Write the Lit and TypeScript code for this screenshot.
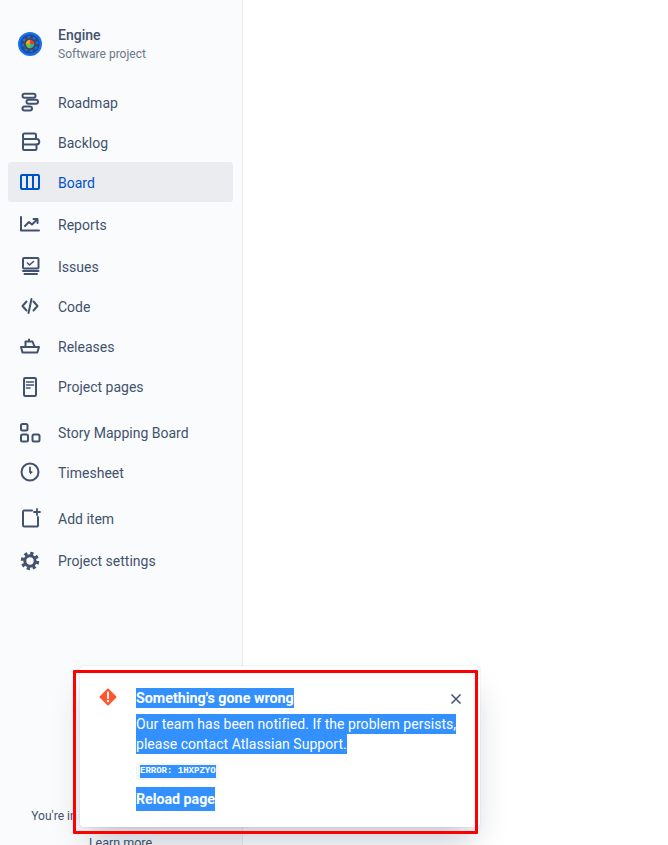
import { LitElement, html, css, svg } from "lit";
import { customElement } from "lit/decorators.js";

const icons: Record<string, unknown> = {
  roadmap: svg`<rect x="4.500" y="2.800" width="13" height="4" rx="2"/><rect x="8.500" y="8.800" width="11.500" height="4" rx="2"/><rect x="4.500" y="15.500" width="9.500" height="4" rx="2"/>`,
  backlog: svg`<rect x="5" y="2.500" width="13" height="5.500" rx="1.500"/><path d="M6.500 8H18.500a1.400 1.400 0 0 1 0 5.500H6.500A1.500 1.500 0 0 1 5 12V9.500A1.500 1.500 0 0 1 6.500 8z"/><path d="M5 12.500v5a1.500 1.500 0 0 0 1.500 1.500H17a1.500 1.500 0 0 0 1.500-1.500v-4"/>`,
  board: svg`<rect x="3" y="4" width="18" height="14" rx="1"/><path d="M9 4v14M15 4v14"/>`,
  reports: svg`<path d="M3 4v13.500h18"/><path d="M7 13l4-4 3 2.500 5-5"/><path d="M15.500 6H19.500V10"/>`,
  issues: svg`<rect x="5" y="3" width="15.500" height="10.500" rx="1"/><path d="M9.500 8l2 2 4-3.500" stroke-width="1.600"/><path d="M5 16h15.500M6.500 19h12.500"/>`,
  code: svg`<path d="M8.500 6.500L4.500 11l4 4.500M15.500 6.500l4 4.500-4 4.500M13.500 4l-3 14"/>`,
  releases: svg`<path d="M3 12h18l-1.700 5.500H4.500z"/><path d="M7.500 11.500V6.500h7l2 5M11 6V4.500"/>`,
  pages: svg`<rect x="6" y="3" width="12" height="18" rx="1.200"/><path d="M8.500 7h7M8.500 10h7M8.500 13h3.500" stroke-width="1.600"/>`,
  story: svg`<rect x="3" y="3" width="6.500" height="6.500" rx="1.500"/><rect x="3" y="13.500" width="7" height="7" rx="1.500"/><rect x="14.500" y="13.500" width="7" height="7" rx="1.500"/>`,
  time: svg`<circle cx="12" cy="11" r="8.500"/><path d="M12 6.500V11" stroke-width="1.800"/><path d="M12 9.500V13.500l3-2.500z" fill="currentColor" stroke="none"/>`,
  add: svg`<path d="M14 3.500H6A1.500 1.500 0 0 0 5 5v13a1.500 1.500 0 0 0 1.500 1.500H19a1 1 0 0 0 1-1.500V10"/><path d="M19 2v6M16 5h6" stroke-width="1.800"/>`,
  settings: svg`<circle cx="12" cy="12" r="5.200" stroke-width="3"/><circle cx="12" cy="12" r="7.700" stroke-width="3" stroke-dasharray="3.200 2.850" stroke-linecap="butt"/>`,
};

const items = [
  { label: "Roadmap", icon: "roadmap", cls: "" },
  { label: "Backlog", icon: "backlog", cls: "" },
  { label: "Board", icon: "board", cls: "active" },
  { label: "Reports", icon: "reports", cls: "m2" },
  { label: "Issues", icon: "issues", cls: "m2" },
  { label: "Code", icon: "code", cls: "" },
  { label: "Releases", icon: "releases", cls: "" },
  { label: "Project pages", icon: "pages", cls: "" },
  { label: "Story Mapping Board", icon: "story", cls: "m6" },
  { label: "Timesheet", icon: "time", cls: "" },
  { label: "Add item", icon: "add", cls: "m6" },
  { label: "Project settings", icon: "settings", cls: "m2" },
];

@customElement("app-root")
export class AppRoot extends LitElement {
  static styles = css`
    :host {
      display: block;
      position: relative;
      width: 668px;
      height: 845px;
      overflow: hidden;
      background: #fff;
      font-family: Roboto, "Noto Sans", sans-serif;
      font-size: 14px;
      color: #42526e;
    }
    .sidebar {
      box-sizing: border-box;
      width: 243px;
      height: 845px;
      background: #fafbfc;
      border-right: 1px solid #ebecf0;
      padding: 24px 9px 0 8px;
      display: flex;
      flex-direction: column;
      overflow: hidden;
    }
    .project {
      display: flex;
      align-items: center;
      gap: 16px;
      padding-left: 10px;
      height: 40px;
      margin-bottom: 18px;
    }
    .project-text { display: flex; flex-direction: column; }
    .name { font-weight: 500; font-size: 14px; line-height: 20px; }
    .sub { font-size: 12px; line-height: 18px; color: #6b778c; }
    .row {
      box-sizing: border-box;
      display: flex;
      align-items: center;
      gap: 16px;
      height: 40px;
      padding: 2px 0 0 10px;
      border-radius: 3px;
    }
    .row svg { flex: none; width: 24px; height: 24px; fill: none; stroke: currentColor; stroke-width: 2; stroke-linecap: round; stroke-linejoin: round; }
    .active { background: #ebecf0; color: #0052cc; }
    .m2 { margin-top: 2px; }
    .m6 { margin-top: 6px; }
    .footer {
      margin-top: auto;
      text-align: center;
      font-size: 12px;
      height: 37px;
    }
    .footer .line1 { line-height: 16px; }
    .footer .learn { font-size: 12.500px; line-height: 16px; margin-top: 11px; }
    .flag {
      position: absolute;
      left: 80px;
      top: 666px;
      box-sizing: border-box;
      width: 400px;
      height: 161px;
      background: #fff;
      border-radius: 3px;
      box-shadow: 0 20px 32px -8px rgba(9, 30, 66, 0.25), 0 0 1px rgba(9, 30, 66, 0.31);
      padding: 22px 16px 16px 56px;
      display: flex;
      flex-direction: column;
    }
    .outline {
      position: absolute;
      left: 73px;
      top: 670px;
      box-sizing: border-box;
      width: 405px;
      height: 164px;
      border: 3px solid #f00;
      border-radius: 1px;
      pointer-events: none;
    }
    .warn { position: absolute; left: 19px; top: 22px; width: 18px; height: 18px; }
    .close { position: absolute; left: 369px; top: 26px; width: 14px; height: 14px; fill: none; stroke: #42526e; stroke-width: 1.500; }
    .sel { display: inline-block; background: #3390ff; color: #fff; vertical-align: top; }
    .title { font-size: 14.300px; font-weight: 700; line-height: 20px; }
    .body { margin-top: 6px; font-size: 14px; line-height: 20px; width: 330px; white-space: nowrap; letter-spacing: 0.04px; }
    .chip {
      align-self: flex-start;
      margin-top: 8px;
      background: #f4f5f7;
      border-radius: 3px;
      padding: 0 3px 0 4px;
      height: 17px;
      display: flex;
      align-items: center;
      font-family: "Liberation Mono", monospace;
      font-weight: 700;
      font-size: 9px;
      line-height: 13px;
      position: relative;
      top: 1px;
    }
    .reload {
      align-self: flex-start;
      margin-top: 8px;
      font-size: 14.200px;
      font-weight: 700;
      line-height: 24px;
    }
  `;

  render() {
    return html`
      <div class="sidebar">
        <div class="project">
          <svg width="24" height="24" viewBox="0 0 24 24" style="flex:none">
            <circle cx="12" cy="12" r="12" fill="#1d6fe6" />
            <circle cx="12" cy="12" r="9" fill="none" stroke="#0b4fc0" stroke-width="1.500" />
            <circle cx="12" cy="12" r="7.500" fill="none" stroke="#3c4658" stroke-width="2.500" stroke-dasharray="3 2.900" />
            <circle cx="12" cy="12" r="6" fill="#3c4658" />
            <path d="M12 12V7.800A4.200 4.200 0 0 1 16.200 12z" fill="#e83c3c" />
            <path d="M12 12H16.200A4.200 4.200 0 0 1 12 16.200z" fill="#2bb5a0" />
            <path d="M12 12V16.200A4.200 4.200 0 0 1 7.800 12z" fill="#7bbf3a" />
            <path d="M12 12H7.800A4.200 4.200 0 0 1 12 7.800z" fill="#f5a623" />
          </svg>
          <div class="project-text">
            <div class="name">Engine</div>
            <div class="sub">Software project</div>
          </div>
        </div>
        ${items.map(
          (i) => html`<div class="row ${i.cls}">
            <svg viewBox="0 0 24 24">${icons[i.icon]}</svg>
            <span>${i.label}</span>
          </div>`
        )}
        <div class="footer">
          <div class="line1">You're in a team-managed project</div>
          <div class="learn">Learn more</div>
        </div>
      </div>
      <div class="flag">
        <svg class="warn" viewBox="0 0 18 18">
          <path d="M9 1.500L16.500 9 9 16.500 1.500 9z" fill="#ff5630" stroke="#ff5630" stroke-width="2" stroke-linejoin="round" />
          <path d="M9 4.500v5.500" stroke="#fff" stroke-width="2" stroke-linecap="round" />
          <circle cx="9" cy="13" r="1.200" fill="#fff" />
        </svg>
        <svg class="close" viewBox="0 0 14 14"><path d="M2.500 2.500l9 9M11.500 2.500l-9 9" /></svg>
        <div class="title"><span class="sel">Something's gone wrong</span></div>
        <div class="body">
          <span class="sel">Our team has been notified. If the problem persists,</span><br />
          <span class="sel">please contact Atlassian Support.</span>
        </div>
        <div class="chip"><span class="sel">ERROR: 1HXPZYO</span></div>
        <div class="reload"><span class="sel">Reload page</span></div>
      </div>
      <div class="outline"></div>
    `;
  }
}
